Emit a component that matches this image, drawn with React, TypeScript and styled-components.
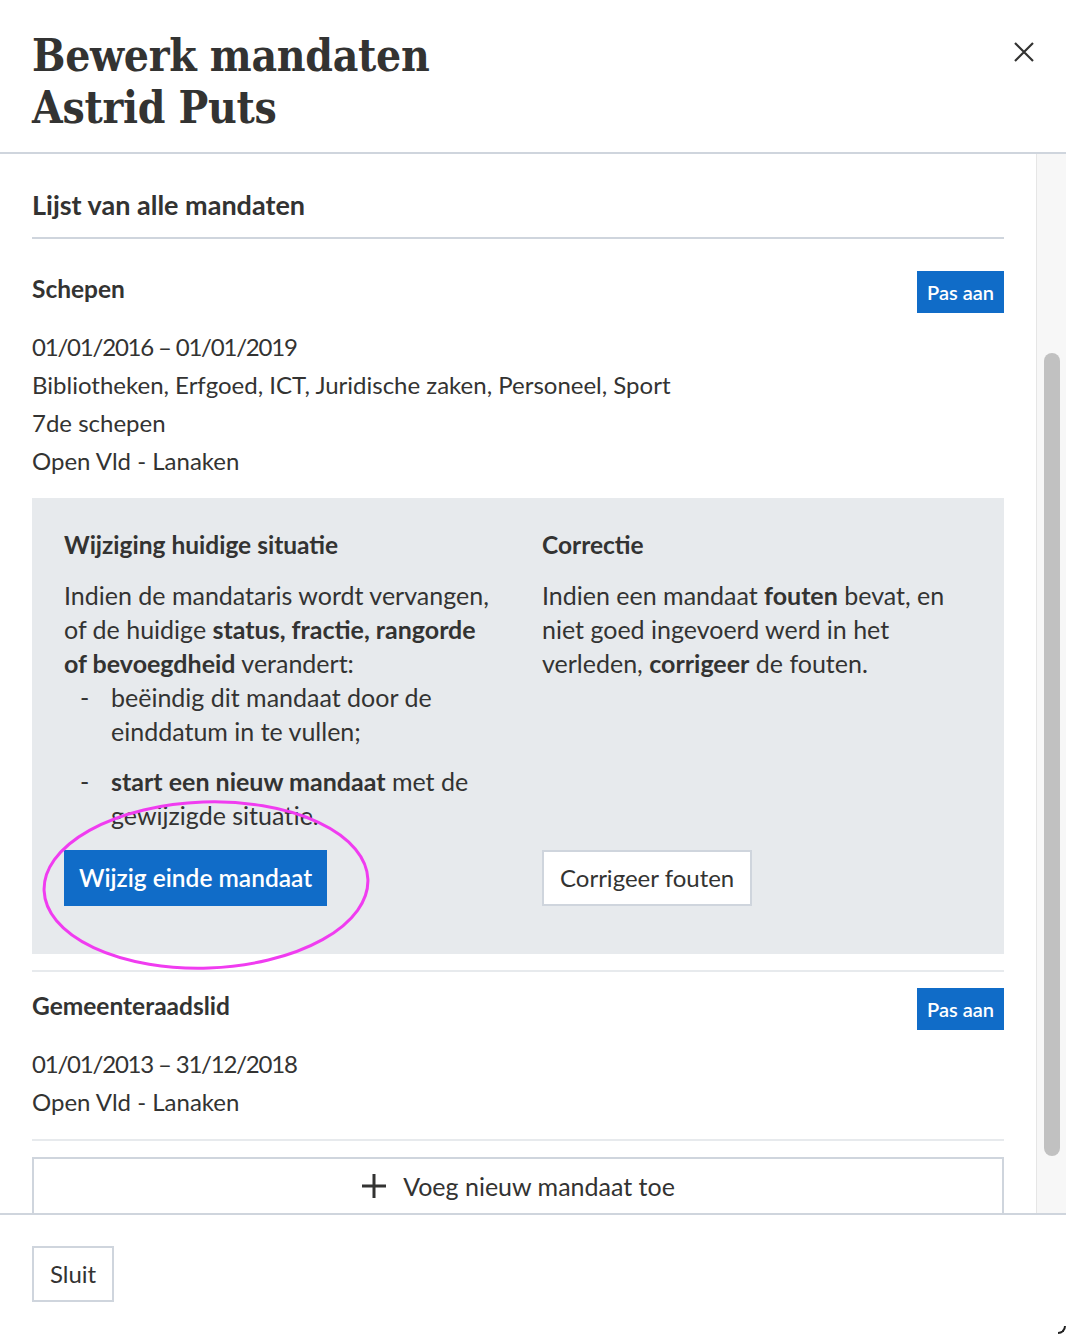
import styled, { createGlobalStyle } from "styled-components";

const GlobalStyle = createGlobalStyle`
  html, body {
    margin: 0;
    padding: 0;
    background: #ffffff;
  }
  body {
    font-family: Lato, "Open Sans", sans-serif;
    color: #333332;
  }
  * {
    box-sizing: border-box;
  }
`;

const BLUE = "#106cc8";
const LINE = "#cfd5dd";
const SOFT_LINE = "#e7eaed";

export default function App() {
  return (
    <>
      <GlobalStyle />
      <Modal>
        <Header>
          <Title>
            Bewerk mandaten
            <br />
            Astrid Puts
          </Title>
          <CloseBtn aria-label="Sluit">
            <svg width="20" height="20" viewBox="0 0 20 20">
              <path d="M1 1 L19 19 M19 1 L1 19" stroke="#333332" strokeWidth="2.2" fill="none" />
            </svg>
          </CloseBtn>
        </Header>

        <ScrollArea>
          <Content>
            <ListTitle>Lijst van alle mandaten</ListTitle>

            <Mandate>
              <MandateHead>
                <MandateName>Schepen</MandateName>
                <PrimaryBtn $small>Pas aan</PrimaryBtn>
              </MandateHead>
              <InfoLines>
                <Dates>01/01/2016 – 01/01/2019</Dates>
                <div>Bibliotheken, Erfgoed, ICT, Juridische zaken, Personeel, Sport</div>
                <div>7de schepen</div>
                <div>Open Vld - Lanaken</div>
              </InfoLines>
            </Mandate>

            <Panel>
              <PanelCol>
                <PanelTitle>Wijziging huidige situatie</PanelTitle>
                <Para>
                  Indien de mandataris wordt vervangen, of de huidige{" "}
                  <b>status, fractie, rangorde of bevoegdheid</b> verandert:
                </Para>
                <DashList>
                  <li>beëindig dit mandaat door de einddatum in te vullen;</li>
                  <li>
                    <b>start een nieuw mandaat</b> met de gewijzigde situatie.
                  </li>
                </DashList>
                <ButtonWrap>
                  <PrimaryBtn>Wijzig einde mandaat</PrimaryBtn>
                  <Highlight viewBox="0 0 340 180" width="340" height="180">
                    <ellipse
                      cx="164"
                      cy="88"
                      rx="162"
                      ry="83"
                      fill="none"
                      stroke="#f03cf0"
                      strokeWidth="3"
                      transform="rotate(-2 164 88)"
                    />
                  </Highlight>
                </ButtonWrap>
              </PanelCol>
              <PanelCol>
                <PanelTitle>Correctie</PanelTitle>
                <Para>
                  Indien een mandaat <b>fouten</b> bevat, en niet goed ingevoerd werd in het verleden,{" "}
                  <b>corrigeer</b> de fouten.
                </Para>
                <ButtonWrap>
                  <SecondaryBtn>Corrigeer fouten</SecondaryBtn>
                </ButtonWrap>
              </PanelCol>
            </Panel>

            <Mandate $divided>
              <MandateHead>
                <MandateName>Gemeenteraadslid</MandateName>
                <PrimaryBtn $small>Pas aan</PrimaryBtn>
              </MandateHead>
              <InfoLines>
                <Dates>01/01/2013 – 31/12/2018</Dates>
                <div>Open Vld - Lanaken</div>
              </InfoLines>
            </Mandate>

            <AddBtn>
              <svg width="26" height="26" viewBox="0 0 26 26">
                <path d="M13 1 V25 M1 13 H25" stroke="#333332" strokeWidth="3" fill="none" />
              </svg>
              Voeg nieuw mandaat toe
            </AddBtn>
          </Content>
          <ScrollTrack>
            <ScrollThumb />
          </ScrollTrack>
        </ScrollArea>

        <Footer>
          <SecondaryBtn>Sluit</SecondaryBtn>
          <Corner />
        </Footer>
      </Modal>
    </>
  );
}

const Modal = styled.div`
  width: 1066px;
  height: 1334px;
  display: flex;
  flex-direction: column;
  overflow: hidden;
  position: relative;
`;

const Header = styled.header`
  height: 154px;
  flex-shrink: 0;
  display: flex;
  justify-content: space-between;
  align-items: flex-start;
  padding: 30px 32px 0 32px;
  border-bottom: 2px solid ${LINE};
`;

const Title = styled.h1`
  margin: 0;
  font-family: "DejaVu Serif", serif;
  font-stretch: condensed;
  font-weight: 700;
  font-size: 44px;
  line-height: 52px;
  color: #333332;
  letter-spacing: -0.3px;
`;

const CloseBtn = styled.button`
  border: none;
  background: none;
  padding: 0;
  margin: 12px 0 0 0;
  width: 20px;
  height: 20px;
  display: flex;
  cursor: pointer;
`;

const ScrollArea = styled.div`
  flex: 1;
  display: flex;
  min-height: 0;
  overflow: hidden;
`;

const Content = styled.div`
  flex: 1;
  padding: 0 32px;
  overflow: hidden;
`;

const ScrollTrack = styled.div`
  width: 30px;
  flex-shrink: 0;
  background: #f7f7f7;
  border-left: 1px solid #e6e6e6;
  display: flex;
  justify-content: center;
  padding-top: 199px;
`;

const ScrollThumb = styled.div`
  width: 16px;
  height: 803px;
  border-radius: 8px;
  background: #c1c1c1;
`;

const ListTitle = styled.h2`
  margin: 0;
  padding: 35px 0 16px 0;
  font-size: 27px;
  line-height: 32px;
  font-weight: 700;
  border-bottom: 2px solid ${LINE};
`;

const Mandate = styled.section<{ $divided?: boolean }>`
  padding-top: ${(p) => (p.$divided ? "16px" : "32px")};
  border-top: ${(p) => (p.$divided ? `2px solid ${SOFT_LINE}` : "none")};
  border-bottom: ${(p) => (p.$divided ? `2px solid ${SOFT_LINE}` : "none")};
  margin-top: ${(p) => (p.$divided ? "16px" : "0")};
`;

const MandateHead = styled.div`
  display: flex;
  justify-content: space-between;
  align-items: flex-start;
  margin-bottom: 15px;
`;

const MandateName = styled.h3`
  margin: 0;
  font-size: 24.5px;
  line-height: 36px;
  font-weight: 700;
`;

const InfoLines = styled.div`
  font-size: 24px;
  line-height: 38px;
  padding-bottom: 18px;
`;

const Dates = styled.div`
  letter-spacing: -1.2px;
`;

const Panel = styled.div`
  background: ${SOFT_LINE};
  padding: 32px 32px 48px 32px;
  display: grid;
  grid-template-columns: 430px 430px;
  column-gap: 48px;
`;

const PanelCol = styled.div`
  display: flex;
  flex-direction: column;
`;

const PanelTitle = styled.h4`
  margin: 0 0 18px 0;
  font-size: 24.5px;
  line-height: 30px;
  font-weight: 700;
`;

const Para = styled.p`
  margin: 0;
  font-size: 25px;
  line-height: 34px;
  max-width: 428px;
  b {
    font-weight: 700;
  }
`;

const DashList = styled.ul`
  margin: 0;
  padding: 0 0 0 47px;
  list-style: none;
  font-size: 25px;
  line-height: 34px;
  li {
    position: relative;
  }
  li + li {
    margin-top: 16px;
  }
  li::before {
    content: "-";
    position: absolute;
    left: -31px;
    top: 0;
  }
  b {
    font-weight: 700;
  }
`;

const ButtonWrap = styled.div`
  margin-top: auto;
  padding-top: 18px;
  position: relative;
  display: flex;
`;

const Highlight = styled.svg`
  position: absolute;
  left: -22px;
  top: -35px;
  pointer-events: none;
  overflow: visible;
`;

const PrimaryBtn = styled.button<{ $small?: boolean }>`
  border: none;
  background: ${BLUE};
  color: #ffffff;
  font-family: Lato, "Open Sans", sans-serif;
  font-weight: 600;
  font-size: ${(p) => (p.$small ? "20px" : "24.5px")};
  height: ${(p) => (p.$small ? "42px" : "56px")};
  padding: ${(p) => (p.$small ? "0 10px" : "0 15px")};
  line-height: 1;
  cursor: pointer;
  white-space: nowrap;
`;

const SecondaryBtn = styled.button`
  border: 2px solid ${LINE};
  background: #ffffff;
  color: #333332;
  font-family: Lato, "Open Sans", sans-serif;
  font-size: 24px;
  height: 56px;
  padding: 0 16px;
  line-height: 1;
  cursor: pointer;
  white-space: nowrap;
`;

const AddBtn = styled.button`
  margin-top: 16px;
  width: 100%;
  height: 58px;
  border: 2px solid ${LINE};
  background: #ffffff;
  color: #333332;
  font-family: Lato, "Open Sans", sans-serif;
  font-size: 25px;
  display: flex;
  align-items: center;
  justify-content: center;
  gap: 16px;
  cursor: pointer;
`;

const Footer = styled.footer`
  height: 121px;
  flex-shrink: 0;
  border-top: 2px solid ${LINE};
  padding: 31px 32px 0 32px;
  display: flex;
  align-items: flex-start;
  position: relative;
`;

const Corner = styled.div`
  position: absolute;
  right: 0;
  bottom: 0;
  width: 8px;
  height: 8px;
  border-right: 2px solid #222;
  border-bottom: 2px solid #222;
  border-bottom-right-radius: 8px;
`;
